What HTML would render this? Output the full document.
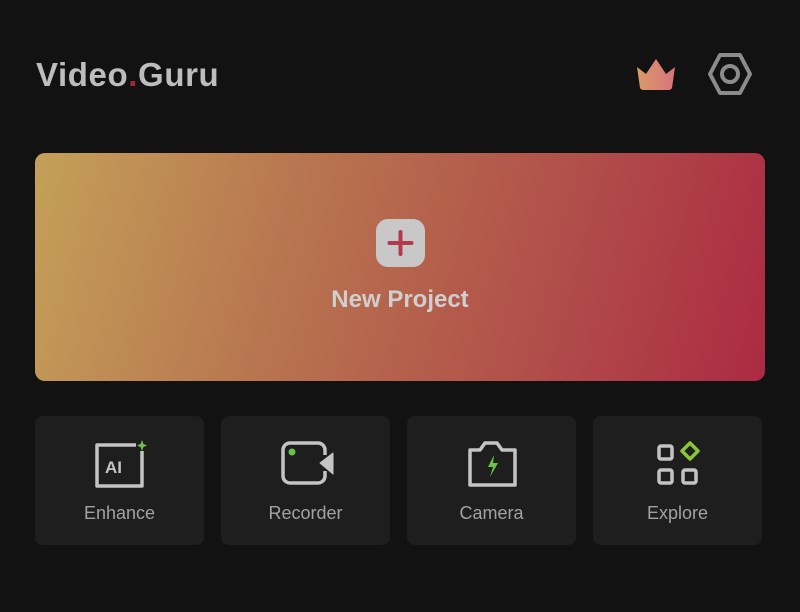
<!DOCTYPE html>
<html><head><style>
body{margin:0;width:800px;height:612px;background:#121212;font-family:"Liberation Sans",sans-serif;position:relative;overflow:hidden}
.logo{position:absolute;left:36px;top:56px;font-size:33px;font-weight:bold;color:#bdbdbd;letter-spacing:0.6px}
.hero{position:absolute;left:35px;top:153px;width:730px;height:228px;border-radius:10px;background:linear-gradient(105deg,#c4a059 0%,#b8754f 35%,#b14e4a 70%,#ac2a42 100%)}
.plus{position:absolute;left:376px;top:219px;width:49px;height:48px;border-radius:12px;background:#c8c8c8}
.np{position:absolute;left:0;width:800px;top:286px;text-align:center;font-size:24px;font-weight:bold;color:#cfcfcf}
.card{position:absolute;top:416px;width:169px;height:129px;border-radius:8px;background:#1e1e1e}
.card span{position:absolute;left:0;right:0;top:87px;text-align:center;font-size:18px;color:#a2a2a2}
.card svg{position:absolute;left:60px;top:24px}
</style></head><body>
<div class="logo">Video<span style="color:#a0263a">.</span>Guru</div>
<svg style="position:absolute;left:636px;top:57px" width="40" height="34" viewBox="0 0 40 34"><defs><linearGradient id="g" x1="0" x2="1"><stop offset="0" stop-color="#d99a6a"/><stop offset="1" stop-color="#d8737a"/></linearGradient></defs><path d="M1 10 L10 17 L20 2 L30 17 L39 10 L36 31 Q35 33 32 33 L8 33 Q5 33 4 31 Z" fill="url(#g)"/></svg>
<svg style="position:absolute;left:707px;top:52px" width="46" height="44" viewBox="0 0 46 44"><path d="M13 3 L33 3 L43 22 L33 41 L13 41 L3 22 Z" fill="none" stroke="#8c8c8c" stroke-width="4" stroke-linejoin="round"/><circle cx="23" cy="22" r="8" fill="none" stroke="#8c8c8c" stroke-width="4"/></svg>
<div class="hero"></div>
<div class="plus"><svg width="49" height="48"><path d="M24.5 13v22M13.5 24h22" stroke="#b23a4a" stroke-width="4" stroke-linecap="round"/></svg></div>
<div class="np">New Project</div>
<div class="card" style="left:35px"><svg width="54" height="48"><path d="M47 11 V46 H2 V5 H41" fill="none" stroke="#c4c4c4" stroke-width="3.5" stroke-linejoin="round"/><text x="10" y="33" font-family="Liberation Sans" font-weight="bold" font-size="17" fill="#c4c4c4">AI</text><path d="M47 0 L48.5 4 L52 5.5 L48.5 7 L47 11 L45.5 7 L42 5.5 L45.5 4Z" fill="#6ac24a"/></svg><span>Enhance</span></div>
<div class="card" style="left:221px"><svg width="54" height="48"><rect x="2" y="3" width="42" height="40" rx="7" fill="none" stroke="#c4c4c4" stroke-width="3.5"/><rect x="38" y="15" width="8" height="16" fill="#1e1e1e"/><path d="M39 23 L52 13 V34 Z" fill="#c4c4c4" stroke="#c4c4c4" stroke-linejoin="round"/><circle cx="11" cy="12" r="3.5" fill="#6ac24a"/></svg><span>Recorder</span></div>
<div class="card" style="left:407px"><svg width="54" height="48"><path d="M3 10 H13 L18 3 H30 L35 10 H48 V45 H3 Z" fill="none" stroke="#c4c4c4" stroke-width="3.5" stroke-linejoin="round"/><path d="M27 15 L21 27 H26 L23 37 L31 23 H26 Z" fill="#6ac24a"/></svg><span>Camera</span></div>
<div class="card" style="left:593px"><svg width="54" height="48"><rect x="6" y="6" width="13" height="13" rx="2" fill="none" stroke="#c4c4c4" stroke-width="3.5"/><rect x="6" y="30" width="13" height="13" rx="2" fill="none" stroke="#c4c4c4" stroke-width="3.5"/><rect x="30" y="30" width="13" height="13" rx="2" fill="none" stroke="#c4c4c4" stroke-width="3.5"/><path d="M37 3 L45 11 L37 19 L29 11 Z" fill="none" stroke="#8cc43c" stroke-width="3.5" stroke-linejoin="round"/></svg><span>Explore</span></div>
</body></html>
